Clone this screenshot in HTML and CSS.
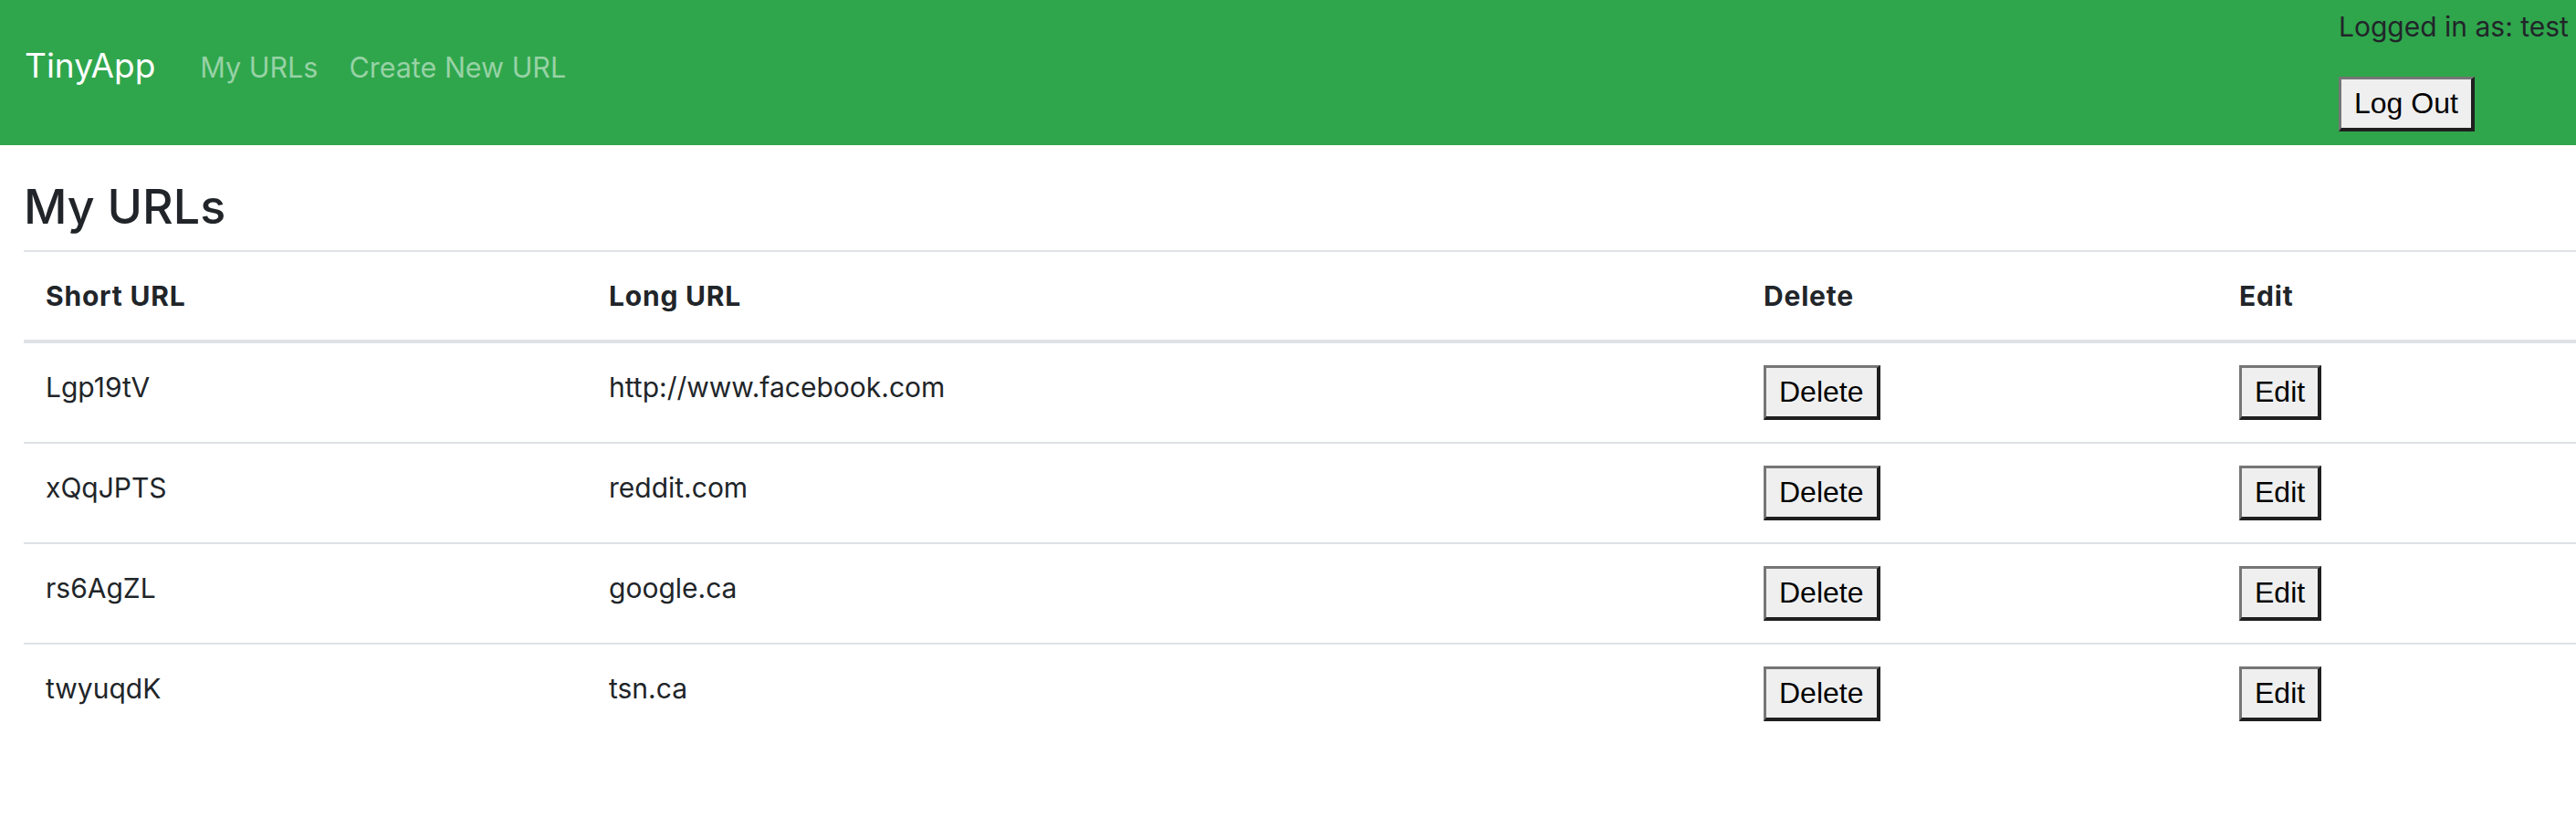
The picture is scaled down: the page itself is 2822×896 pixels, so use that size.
FILE: index.html
```html
<!DOCTYPE html>
<html lang="en">
<head>
<meta charset="utf-8">
<title>TinyApp</title>
<link rel="stylesheet" href="styles.css">
</head>
<body>
<div class="page">
  <nav class="navbar">
    <div class="nav-left">
      <a class="brand" href="#">TinyApp</a>
      <a class="nav-link" href="#">My URLs</a>
      <a class="nav-link" href="#">Create New URL</a>
    </div>
    <div class="nav-right">
      <div class="login-text">Logged in as: test</div>
      <form class="logout-form">
        <button class="btn" type="button">Log Out</button>
      </form>
    </div>
  </nav>
  <main class="content">
    <h3 class="title">My URLs</h3>
    <table class="url-table">
      <colgroup>
        <col class="c1"><col class="c2"><col class="c3"><col class="c4">
      </colgroup>
      <thead>
        <tr><th>Short URL</th><th>Long URL</th><th>Delete</th><th>Edit</th></tr>
      </thead>
      <tbody>
        <tr><td>Lgp19tV</td><td>http://www.facebook.com</td><td><button class="btn" type="button">Delete</button></td><td><button class="btn" type="button">Edit</button></td></tr>
        <tr><td>xQqJPTS</td><td>reddit.com</td><td><button class="btn" type="button">Delete</button></td><td><button class="btn" type="button">Edit</button></td></tr>
        <tr><td>rs6AgZL</td><td>google.ca</td><td><button class="btn" type="button">Delete</button></td><td><button class="btn" type="button">Edit</button></td></tr>
        <tr><td>twyuqdK</td><td>tsn.ca</td><td><button class="btn" type="button">Delete</button></td><td><button class="btn" type="button">Edit</button></td></tr>
      </tbody>
    </table>
  </main>
</div>
</body>
</html>
```

FILE: styles.css
```css
html, body {
  margin: 0;
  padding: 0;
  overflow: hidden;
  background: #ffffff;
}

body {
  font-family: Inter, "Noto Sans", "Liberation Sans", sans-serif;
  font-size: 30px;
  line-height: 48px;
  color: #212529;
}

.page {
  width: 3200px;
}

.navbar {
  display: flex;
  align-items: flex-start;
  height: 159px;
  box-sizing: border-box;
  padding-left: 27px;
  background: #2fa64c;
}

.nav-left {
  flex: 0 0 2535px;
  display: flex;
  align-items: baseline;
  padding-top: 45px;
}

.brand {
  font-size: 37px;
  line-height: 54px;
  color: #ffffff;
  text-decoration: none;
  margin-right: 32px;
}

.nav-link {
  font-size: 30.5px;
  line-height: 43px;
  color: #97d2a5;
  text-decoration: none;
  padding: 0 17px;
}

.nav-right {
  padding-top: 8px;
}

.login-text {
  font-size: 30px;
  line-height: 43px;
  color: #212529;
  white-space: nowrap;
}

.logout-form {
  margin: 33px 0 0 0;
}

.btn {
  font-family: "Liberation Sans", Arial, sans-serif;
  font-size: 32px;
  line-height: 37px;
  color: #000000;
  background: #efefef;
  padding: 8px 14px;
  margin: 0;
  border-style: solid;
  border-width: 3px 4px 4px 3px;
  border-color: #767676 #1f1f1f #1f1f1f #767676;
  border-radius: 0;
  display: inline-block;
  vertical-align: top;
}

.content {
  padding: 38px 0 0 26px;
}

.title {
  font-size: 52px;
  line-height: 60px;
  font-weight: 500;
  margin: 0 0 17px 0;
}

.url-table {
  border-collapse: collapse;
  table-layout: fixed;
  width: 3174px;
}

.c1 { width: 617px; }
.c2 { width: 1265px; }
.c3 { width: 521px; }
.c4 { width: 771px; }

.url-table th,
.url-table td {
  text-align: left;
  vertical-align: top;
  padding: 24px;
  border-top: 2px solid #dee2e6;
}

.url-table th {
  font-weight: 700;
  letter-spacing: 0.8px;
  border-bottom: 4px solid #dee2e6;
}
```
